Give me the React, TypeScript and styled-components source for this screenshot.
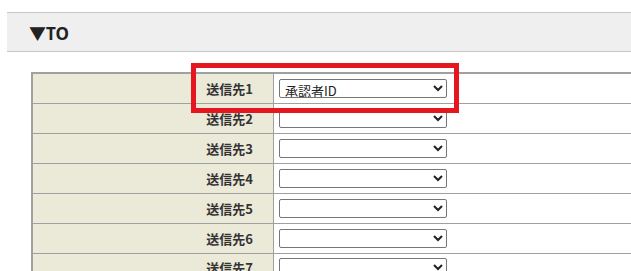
import React from 'react'
import styled, { createGlobalStyle } from 'styled-components'

const GlobalStyle = createGlobalStyle`
  html, body {
    margin: 0;
    padding: 0;
    background: #fff;
    overflow: hidden;
  }
  body {
    font-family: "Noto Sans CJK JP", "Noto Sans", sans-serif;
    color: #333;
  }
`

const Page = styled.div`
  position: relative;
  width: 660px;
  padding-top: 12px;
`

const SectionHeader = styled.h2`
  margin: 0 0 0 7px;
  height: 38px;
  box-sizing: content-box;
  display: flex;
  align-items: center;
  padding-left: 22px;
  background: #efefef;
  border-top: 1px solid #c8c8c8;
  border-bottom: 1px solid #c8c8c8;
  font-family: "Noto Sans", "Noto Sans CJK JP", sans-serif;
  font-size: 17px;
  font-weight: 700;
  color: #222;
`

const FormTable = styled.table`
  margin: 20px 0 0 31px;
  width: 629px;
  border-collapse: collapse;
  border: 2px solid #a0a0a0;
  border-right: none;
`

const Row = styled.tr`
  height: 30px;
`

const LabelCell = styled.th`
  width: 220px;
  padding: 0 20px 0 0;
  background: #ebe9d8;
  border: 1px solid #a0a0a0;
  border-left: 2px solid #a0a0a0;
  text-align: right;
  font-size: 13px;
  font-weight: 700;
  color: #333;
  white-space: nowrap;
`

const ValueCell = styled.td`
  padding: 0 0 0 5px;
  border: 1px solid #a0a0a0;
  border-right: none;
  background: #fff;
`

const Select = styled.select`
  display: block;
  width: 168px;
  height: 19px;
  padding: 0 1px;
  border: 1px solid #767676;
  border-radius: 2px;
  background: #fff;
  font-family: "Noto Sans CJK JP", sans-serif;
  font-size: 13px;
  line-height: 17px;
  color: #222;
`

const Highlight = styled.div`
  position: absolute;
  left: 191px;
  top: 63px;
  width: 268px;
  height: 50px;
  box-sizing: border-box;
  border: 5px solid #e5161d;
  pointer-events: none;
`

const rows = [
  { label: '送信先1', value: '承認者ID' },
  { label: '送信先2', value: '' },
  { label: '送信先3', value: '' },
  { label: '送信先4', value: '' },
  { label: '送信先5', value: '' },
  { label: '送信先6', value: '' },
  { label: '送信先7', value: '' },
]

export default function App() {
  return (
    <>
      <GlobalStyle />
      <Page>
        <SectionHeader>▼TO</SectionHeader>
        <FormTable>
          <tbody>
            {rows.map(r => (
              <Row key={r.label}>
                <LabelCell>{r.label}</LabelCell>
                <ValueCell>
                  <Select defaultValue={r.value}>
                    <option value="">{''}</option>
                    <option value="承認者ID">承認者ID</option>
                  </Select>
                </ValueCell>
              </Row>
            ))}
          </tbody>
        </FormTable>
        <Highlight />
      </Page>
    </>
  )
}
